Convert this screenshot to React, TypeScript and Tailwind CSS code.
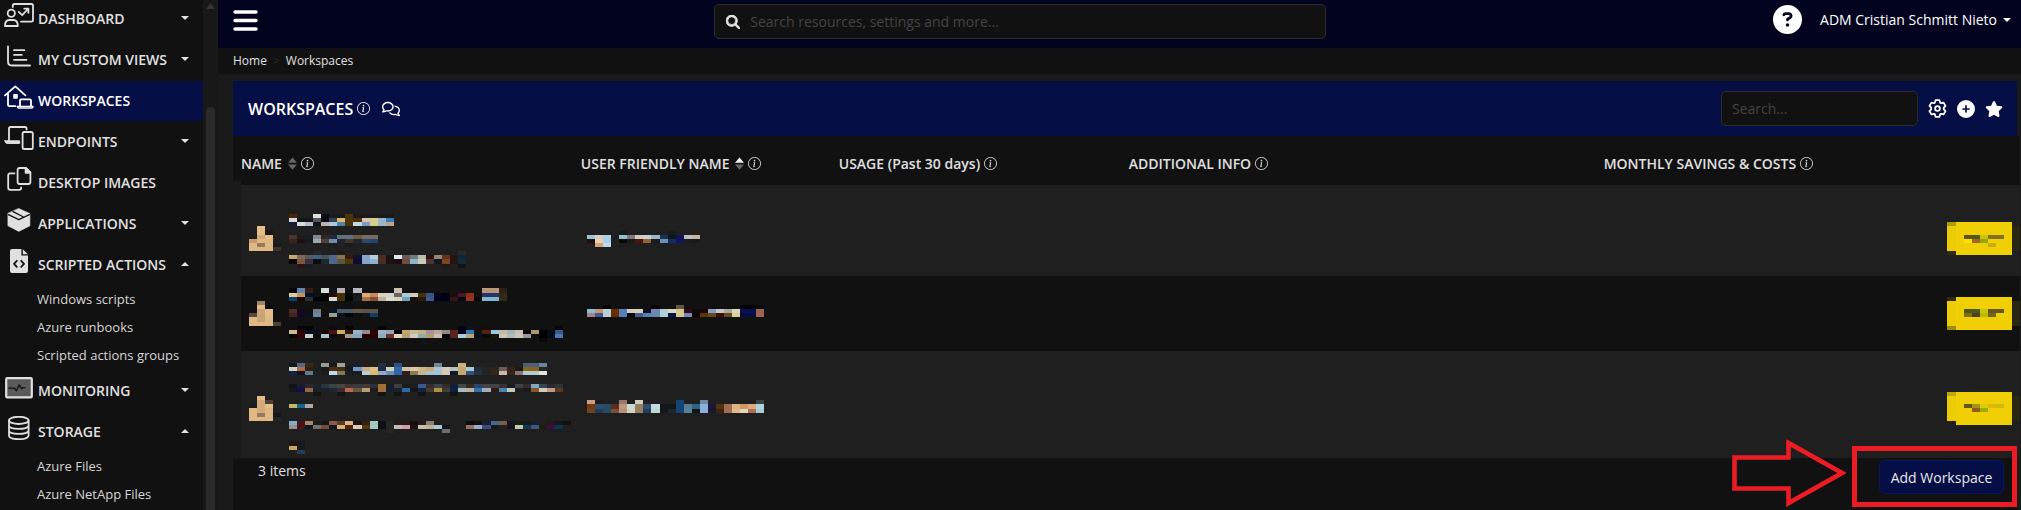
import React from "react";
import { FaCirclePlus, FaCircleQuestion, FaMagnifyingGlass, FaRegComments, FaStar } from "react-icons/fa6";
import { BsInfoCircle } from "react-icons/bs";

/* ---------- pixelated cell content ---------- */

type Strip = [number, string];

const CELL = 8.06;

function Mosaic({ strips, width, height }: { strips: Strip[]; width: number; height: number }) {
  return (
    <svg width={width} height={height} aria-hidden="true" shapeRendering="crispEdges" className="block shrink-0">
      {strips.map(([y, colours], r) => {
        const next = strips[r + 1];
        const h = next && next[0] - y < 6 ? next[0] - y : 4;
        return colours.split(" ").map((c, i) => {
          if (c === ".") return null;
          const x = Math.round(i * CELL);
          return <rect key={`${r}-${i}`} x={x} y={y} width={Math.round((i + 1) * CELL) - x} height={h} fill={`#${c}`} />;
        });
      })}
    </svg>
  );
}

const thumbs: Strip[][] = [
  [
    [25, ". e6bd88"],
    [29, ". e6bd88 181818"],
    [34, ". d4aa7a e6bd88"],
    [38, "c89c70 e0b884 e0b884"],
    [42, "e0b884 967a5c e0b884 181a1c"],
    [46, "e0b884 e0b884 e0b884 3c342c"],
  ],
  [
    [25, ". 9c8464"],
    [29, ". e6bd88 0a0a0a"],
    [33, ". c8a478 e6bd88"],
    [37, "5c4838 c8a478 e6bd88"],
    [41, "e0b884 c8a478 e0b884"],
    [46, "e0b884 e0b884 e0b884 4c4030"],
  ],
  [
    [45, ". e6bd88"],
    [49, ". d4aa7a 4c4238"],
    [53, "181a1c d4aa7a e6bd88"],
    [57, "e0b884 d4aa7a e0b884"],
    [62, "e0b884 967a5c e0b884 14181a"],
    [66, "e0b884 e0b884 e0b884 242424"],
  ],
];

const names: Strip[][] = [
  [
    [13, "4a2408 . . e0e0e0 0a0c12 1a1a1a 1a1a1a 4a3408 1a1a1a 1a1a1a 1a1a1a 1a1a1a 1a1a1a"],
    [17, "d8dce0 141414 141414 505860 0a0c14 33415a d9b870 4a3408 46340f e0c0b4 d8cc8c 9cb4c8 3c7cb4"],
    [21, "1a1a30 d4dce0 b4bccc 121416 c0b0ae a8c8dc 5480b0 4a3408 c8d8e0 7c9cc0 d8cc8c 9cb4c8 c0a484"],
    [34, "4c342c 1c1c1c 1a1e1e 84888e 302820 1c2840 607080 607080 6c5c48 786c60 786c60"],
    [38, "3a2422 220e12 141c1e 9ca8ac 4c4038 748cac 20242c 443428 22282c 30486c 244470"],
    [42, ". . . . . . . 181a22"],
    [50, ". . . 262626 . . 201a16 . . . . . 262422 . . . . . . . . 2a2a2a"],
    [54, "c8a870 806858 5c5860 40608c 485458 50648c 84744c 381808 101030 88a4cc b4ccd4 4c2c24 181414 e0e8ec 6c5854 747c78 b8b8b0 2c1010 948480 64301a 241414 0c2834"],
    [58, "080404 7c5844 383040 0c0c0c 202830 4c6890 5c5840 4c380c 0c0c30 88a4cc 8cb4cc 4c2c24 181414 200a12 6c4c3c 8cb4cc ccccb4 4c3430 14181c 7c4420 241414 182838"],
    [63, ". 2c1014 161e20 . . . . . . . . . . . . . . . . 201818 . 141414"],
  ],
  [
    [12, "080008 6484b0 381c14 . d4dcd4 101418 b8b0b0 0c1010 b4b8c0 . . . . ccc0b0 . . . . . . . . . . b89878 b89878 2c2018"],
    [17, "dccc94 c89454 001038 0c1010 040404 2c0800 443004 040a08 141818 dca878 c88858 dcd0bc d0d4cc 6c6460 a8ccd4 d4ccb8 443010 3c5080 040420 000018 200c0c 4c1828 8c3018 . 283468 283468 342818"],
    [21, "0c4078 200404 283030 000008 040404 d8d8d8 443004 040404 181c1c a87048 845038 bcb09c d8dcd0 d8d0b8 6ca4bc 181008 281808 405890 000018 000018 301814 080814 943420 0a0a0a 80b8d4 80b8d4 342818"],
    [33, "502c24 140818 0e1014 707c88 140e08 0a1428 485864 485864 645848 5c5448 5c5448"],
    [37, "402420 180424 0c1014 6c88a0 101010 98a08c 0c141c 000408 0c1010 0c1420 143c6c"],
    [50, ". 080004 080404 . . 0a0a14 . 080404 . . . 080404 . . . . . . . . . 04040c 0a1420 . 180c08 . . . . . . . . 04040c"],
    [54, "c8bc8c 300000 001028 0c1014 140408 4c1014 d0ac68 2c1808 98b4c4 948c8c 300004 98b4c4 94a4b0 080004 c8a468 c0bc9c c4b080 a090a0 b4a898 948880 5c2420 000020 3478ac 0c1010 542014 98c8e4 c0b8a8 a4b4b4 c8c0b0 0c0408 ac9870 000000 040c18 3c5888"],
    [58, "040404 300000 ccccc8 0c0c10 a8c4d0 080c10 14100c a89890 84a8c0 280000 280004 8cacc0 702c24 e0d8c0 b4a070 d0ccb8 8cacb0 b49c68 c8c0b0 000000 5c2420 b0ccd4 b8a878 0c1014 080804 1c1404 ccc4b4 b0bab8 ccc4b4 94989c 101010 000000 040c18 4c78b4"],
    [62, ". . . . . . . . . . . . . . . . . . . . . . . . . . . . . . . 080808"],
  ],
  [
    [12, "14161c 506880 38281a 1c2020 949c98 18181c a0a0a0 . 18202c . . 203044 . 305080 . . . . 708898 . . c8b480 . . . . . . . 4c607c 4c607c 6c8490"],
    [16, "d0d4c0 b06848 381c10 1c2020 181818 542c0c 403010 141a1c 7098c4 d0a884 dcc08c 1c2c44 ccd0bc 3068a8 d0c0a8 dcc8a8 ccb888 c4ac74 a8c4d0 d4ccbc b8c0b8 c0a870 a8c8d4 1c2c38 202424 342414 64605c 3c2018 1c1a18 8c6418 8c6418 202830"],
    [20, "182048 14141c 5c7c8c 1c2020 1c1c1c b8d8f4 847460 1a1e1e 1c1c20 b0d0dc dcb868 98a8c4 6890b0 2c68b0 341c18 8c7c50 c0b490 a8c0d0 a4c4d4 d4c8b8 141828 c0a870 385080 203440 202424 30281c d0b8a8 302818 8c7474 b0ccd0 b0ccd0 e8e4d4"],
    [33, "101418 1c1c30 302828 1c2028 283440 384440 484440 443430 383c3c 443830 283038 a07034 1c1c20 3c4044 1c1c1c 1e1e20 3c5888 382c28 3c444c 342c28 102038 404848 302a28 284468 444444 444444 3c302c 1c1c28 3c4444 342c28 80a8c4 384450 242a30 2c3438"],
    [37, "101820 10104c 906848 1c2028 182028 1c2838 382c30 b86858 6c543c b4a07c 201c18 a07034 102038 1c2024 2c68b0 14161c 142440 443c34 b09040 443c34 0c2040 a4bcc0 bcb09c 3070a8 a4b0b8 301c14 4484b4 c4c8b8 1e1e20 181c1c 885828 c8d0bc c09888 5c3820"],
    [41, ". . . 141414 . . 141414 . . . . 141414 . 141414 . . 141414 . . . 141414"],
    [53, "c4b464 106890 b0a8a4"],
    [70, "80acd0 481418 a48868 1c1c1c 14161c 905848 5c3828 e0b488 1c1412 342010 a4c8c0 101014 242424 241c18 241818 180c0c 241c18 8c8078 201c1c . . . 0c0c0c 101010 182030 44688c 785c4c 141420 181c18 141c20 14202c . 201818 14141a 101010"],
    [74, "a08c80 481418 101820 74706a 784838 101820 d8b070 4c2808 e0ccb4 50380c a4c8c0 101014 242424 c4bcb4 cca0a4 201012 c8bcac b8b49c acc8d4 14161c 202018 . 987060 9cacc0 444880 141c18 242020 16101c c0c8a8 103850 445480 201c10 3c1040 083850 202020"],
    [78, ". . . . . . . . . . . . 262626 . . . . . . 6c6c6c"],
    [90, "201810 161a1c"],
    [95, "c8a860 18181c"],
    [99, ". 243c54"],
  ],
];

const friendlyNames: Strip[][] = [
  [
    [30, ". . . . 181a1a . . . . . 181a1c"],
    [34, "90c8d8 d8ccc8 b4d0e0 1a1e1e 90c0d0 807878 d0ccc0 c8d0d8 a0b4c8 18344c 101418 14145c c0c0b8 c4b4a8"],
    [38, "200c0c e8d4ac a8d0ec 1c201e 080a08 181c18 4c140c 946438 181c20 6c90bc 0c2c68 14145c 181c1c 181a1a"],
    [42, ". d4a080 b8dce8"],
  ],
  [
    [29, ". . 040404 . . . . . 0a0604 . . 605844 . . . . . . . 040408 040408 0a0c0e"],
    [33, "88bcd0 cc9474 b4d0d8 6c2c00 5480bc d8ccbc d8d0b8 041020 6c88b0 b0d0d8 dcd8b8 d4c890 300818 080c0c 1c0408 8c9cbc c0c8cc a8a89c dcd4c4 081054 081054 9c6450"],
    [37, "a48488 405890 b4d0d8 6c2c00 5480bc 080808 485c8c 5480bc 6c88b0 b0d0d8 001848 d4c890 7888b8 100000 583800 644820 400c04 604820 dcd090 080c44 080c44 9c6450"],
  ],
  [
    [49, "c8a080 181a1c . . 987868 . d0ccc0 . . . . 144474 . . 6c8ca4 . . . . . . 384448"],
    [53, "703c18 344c6c 244c64 5c2c1c c09880 c8dcd4 948060 304c6c bcdce4 141618 14161a 144474 547c94 2c6484 8cb0d8 161840 54340c a06c54 dcb480 d09860 dcac78 b0d4dc"],
    [58, "744418 203c58 244c64 7c5038 b89078 d0d4bc 948060 203c58 c0d8cc 14181a 1c2830 144474 5c8098 101418 8cb0d8 181828 3c2410 a06c54 e0b88c e0d8bc b06c58 a8ccd4"],
  ],
];

const costs: Strip[][] = [
  [
    [34, ". . 5c5414 4c5c14 ccc408 84701c 84701c"],
    [38, ". . fce000 a86420 94a808"],
    [42, ". . . . . ccac10"],
  ],
  [
    [33, ". . 4c5814 4c5814 c8c408 645820 645820"],
    [37, ". . 806c1c 4c4020 bcb808 706818"],
  ],
  [
    [53, ". . 645420 a49410 dccc08 e0b80c d0b80c"],
    [57, ". . . 945824 9cac08"],
  ],
];

const rows = [
  { height: 75, badge: 21, corners: ["#b09a08", "#2e2a14"], tone: "bg-[#1f1f1f]", pad: "pt-4" },
  { height: 75, badge: 21, corners: ["#2e2a14", "#a08c10"], tone: "bg-[#111111]", pad: "" },
  { height: 107, badge: 41, corners: ["#c0a808", "#1f1f1f"], tone: "bg-[#1f1f1f]", pad: "" },
];

function CostBadge({ index }: { index: number }) {
  const { height, badge, corners } = rows[index];
  return (
    <svg width={73} height={height} aria-hidden="true" shapeRendering="crispEdges" className="block">
      <rect x={0} y={badge} width={9} height={4} fill={corners[0]} />
      <rect x={0} y={badge + 4} width={9} height={25} fill="#eccc04" />
      <rect x={0} y={badge + 29} width={9} height={4} fill={corners[1]} />
      <rect x={9} y={badge} width={56} height={33} fill="#f0d004" />
      <rect x={65} y={badge + 4} width={8} height={25} fill="#2a2612" />
      {costs[index].map(([y, colours]) =>
        colours.split(" ").map((c, i) =>
          c === "." ? null : <rect key={`${y}-${i}`} x={1 + i * 8} y={y} width={8} height={4} fill={`#${c}`} />
        )
      )}
    </svg>
  );
}

/* ---------- icons ---------- */

function Icon({ children }: { children: React.ReactNode }) {
  return (
    <svg
      width={30}
      height={24}
      viewBox="0 0 30 24"
      fill="none"
      stroke="currentColor"
      strokeWidth={1.8}
      strokeLinecap="round"
      strokeLinejoin="round"
      aria-hidden="true"
      className="mb-1.5 shrink-0"
    >
      {children}
    </svg>
  );
}

const icons = {
  dashboard: (
    <Icon>
      <path d="M8.8 4V2.6Q8.8 1 10.4 1H27.4Q29 1 29 2.6V17Q29 18.6 27.4 18.6H17" />
      <circle cx="7.3" cy="10.2" r="3.6" />
      <path d="M1 23Q1 17 5.4 17H9.4Q13.8 17 13.8 23Z" />
      <path d="M14.8 8.8L18.2 12.2L24 6M20.2 5.6H24.4V9.8" />
    </Icon>
  ),
  views: (
    <Icon>
      <path d="M4 2.5V17.5Q4 21.5 8 21.5H26" />
      <path d="M10 6.2H20.3M10 10.9H17.8M10 15.8H22.5" />
    </Icon>
  ),
  workspaces: (
    <Icon>
      <path d="M1 10.4L11.3 1.4L21.4 10.4M4 8.5V19.6Q4 21.2 5.6 21.2H11.5" />
      <rect x="9.2" y="9" width="4.6" height="4.8" rx="0.8" fill="currentColor" stroke="none" />
      <path d="M16 20.4V15.6Q16 14.4 17.2 14.4H25.8Q27 14.4 27 15.6V20.4" />
      <path d="M13.4 21.4H29Q29 23 27.6 23H14.8Q13.4 23 13.4 21.4Z" strokeWidth={1.4} />
    </Icon>
  ),
  endpoints: (
    <Icon>
      <path d="M5 14.5V2.6Q5 1 6.6 1H21Q22.6 1 22.6 2.6V3.4" />
      <path d="M1 14.8H15.6V17.4H3Q1 17.4 1 14.8Z" fill="currentColor" strokeWidth={1} />
      <rect x="18.6" y="6" width="10.2" height="17" rx="1.6" />
    </Icon>
  ),
  images: (
    <Icon>
      <path d="M13.6 3Q13.6 1 15.6 1H22L26.4 5.4V15Q26.4 17 24.4 17H15.6Q13.6 17 13.6 15Z" />
      <path d="M21.6 1V5.8H26.4Z" fill="currentColor" />
      <path d="M10.4 6.4H6.2Q4.2 6.4 4.2 8.4V20.8Q4.2 22.8 6.2 22.8H15.2Q17.2 22.8 17.2 20.8V20.4" />
    </Icon>
  ),
  applications: (
    <Icon>
      <path
        d="M14.8 0.6L25.9 5.6V17.8L14.8 23.4L3.9 17.8V5.6Z"
        fill="currentColor"
        stroke="currentColor"
        strokeWidth={0.6}
      />
      <path d="M4.4 6.6L14.8 11.6L25.4 6.6M9 3.6L19.6 9" stroke="#111111" strokeWidth={1.3} />
    </Icon>
  ),
  scripts: (
    <Icon>
      <path d="M8 0H17.4V6.4H24V22Q24 24 22 24H8Q6 24 6 22V2Q6 0 8 0Z" fill="currentColor" stroke="none" />
      <path d="M18.8 0.2L23.8 5.2H18.8Z" fill="currentColor" stroke="none" />
      <path d="M12.8 11.8L10 14.8L12.8 17.8M17.2 11.8L20 14.8L17.2 17.8" stroke="#111111" />
    </Icon>
  ),
  monitoring: (
    <Icon>
      <rect x="2.2" y="3.2" width="25.6" height="19.2" rx="1" fill="#5a5a5a" strokeWidth={2.2} />
      <path d="M5 13.2H10.6L12.4 15.8L15.2 9.8L17.6 13.8L19 12.6H20.6" stroke="#111111" strokeWidth={1.3} />
    </Icon>
  ),
  storage: (
    <Icon>
      <ellipse cx="14.8" cy="4.4" rx="9.8" ry="3.6" />
      <path d="M5 4.4V19.6C5 24.4 24.6 24.4 24.6 19.6V4.4M5 9.6C5 14 24.6 14 24.6 9.6M5 14.6C5 19 24.6 19 24.6 14.6" />
    </Icon>
  ),
};

function GearIcon() {
  return (
    <svg width={19} height={19} viewBox="0 0 19 19" fill="none" stroke="currentColor" aria-hidden="true">
      <path
        d="M7.6 1.2H11.4L12.1 3.6L13.2 4.2L15.6 3.6L17.5 6.9L15.8 8.7V10.3L17.5 12.1L15.6 15.4L13.2 14.8L12.1 15.4L11.4 17.8H7.6L6.9 15.4L5.8 14.8L3.4 15.4L1.5 12.1L3.2 10.3V8.7L1.5 6.9L3.4 3.6L5.8 4.2L6.9 3.6Z"
        strokeWidth={1.8}
        strokeLinejoin="round"
      />
      <circle cx="9.5" cy="9.5" r="2.4" strokeWidth={1.8} />
    </svg>
  );
}

type NavItem = {
  label: string;
  icon: React.ReactNode;
  caret?: "up" | "down";
  active?: boolean;
  children?: string[];
};

const nav: NavItem[] = [
  { label: "DASHBOARD", icon: icons.dashboard, caret: "down" },
  { label: "MY CUSTOM VIEWS", icon: icons.views, caret: "down" },
  { label: "WORKSPACES", icon: icons.workspaces, active: true },
  { label: "ENDPOINTS", icon: icons.endpoints, caret: "down" },
  { label: "DESKTOP IMAGES", icon: icons.images },
  { label: "APPLICATIONS", icon: icons.applications, caret: "down" },
  {
    label: "SCRIPTED ACTIONS",
    icon: icons.scripts,
    caret: "up",
    children: ["Windows scripts", "Azure runbooks", "Scripted actions groups"],
  },
  { label: "MONITORING", icon: icons.monitoring, caret: "down" },
  { label: "STORAGE", icon: icons.storage, caret: "up", children: ["Azure Files", "Azure NetApp Files"] },
];

function Caret({ dir = "down" }: { dir?: "up" | "down" }) {
  return (
    <svg width={8} height={4} viewBox="0 0 8 4" fill="currentColor" aria-hidden="true" className="shrink-0">
      <path d={dir === "down" ? "M0 0H8L4 4Z" : "M0 4H8L4 0Z"} />
    </svg>
  );
}

function Sidebar() {
  return (
    <aside className="flex shrink-0">
      <nav aria-label="Main" className="-mt-px w-[203px]">
        <ul>
          {nav.map((item) => (
            <li key={item.label} className="mb-px">
              <button
                type="button"
                className={
                  item.active
                    ? "flex h-10 w-full items-center gap-1 bg-[#060e46] pr-3.5 pb-0.5 pl-1 text-white"
                    : "flex h-10 w-full items-center gap-1 pr-3.5 pb-0.5 pl-1 text-[#e0e0e0]"
                }
              >
                {item.icon}
                <span className="flex-1 text-left text-[14px] font-semibold whitespace-nowrap">{item.label}</span>
                {item.caret && <Caret dir={item.caret} />}
              </button>
              {item.children && (
                <ul className="pb-px">
                  {item.children.map((c) => (
                    <li key={c}>
                      <a href="#" className="flex h-7 items-center pt-0.5 pl-[37px] text-[13px] text-[#d6d6d6]">
                        {c}
                      </a>
                    </li>
                  ))}
                </ul>
              )}
            </li>
          ))}
        </ul>
      </nav>
      <div aria-hidden="true" className="flex w-[15px] flex-col items-center bg-[#181818] pt-[3px]">
        <svg width={9} height={6} viewBox="0 0 9 6" fill="#333333">
          <path d="M0 6L4.5 0L9 6Z" />
        </svg>
        <div className="mt-[98px] w-[9px] flex-1 rounded-t-full bg-[#2b2b2b]" />
      </div>
    </aside>
  );
}

/* ---------- table ---------- */

function SortIcon({ up }: { up?: boolean }) {
  return (
    <svg width={9} height={13} viewBox="0 0 9 13" aria-hidden="true">
      <path d="M0 5.8L4.5 0.5L9 5.8Z" fill={up ? "#f0f0f0" : "#666666"} />
      <path d="M0 7.4L4.5 12.7L9 7.4Z" fill="#666666" />
    </svg>
  );
}

const columns: { label: string; width: string; sort?: "none" | "up" }[] = [
  { label: "NAME", width: "w-[19.1%]", sort: "none" },
  { label: "USER FRIENDLY NAME", width: "w-[14.5%]", sort: "up" },
  { label: "USAGE (Past 30 days)", width: "w-[16.3%]" },
  { label: "ADDITIONAL INFO", width: "w-[26.7%]" },
  { label: "MONTHLY SAVINGS & COSTS", width: "w-[23.4%]" },
];

function WorkspaceTable() {
  return (
    <div className="bg-[linear-gradient(#111111_45px,#1a1a1a_45px)] pl-2">
      <table className="w-full table-fixed border-collapse">
        <thead>
          <tr className="h-[49px] bg-[#111111]">
            {columns.map((c) => (
              <th key={c.label} scope="col" className={`${c.width} p-0 text-left`}>
                <div className="flex items-center gap-1 pt-1.5 text-[14px] font-semibold whitespace-nowrap text-[#e0e0e0]">
                  <span>{c.label}</span>
                  {c.sort && (
                    <button type="button" aria-label={`Sort by ${c.label}`} className="ml-0.5">
                      <SortIcon up={c.sort === "up"} />
                    </button>
                  )}
                  <BsInfoCircle size={13} />
                </div>
              </th>
            ))}
          </tr>
        </thead>
        <tbody>
          {rows.map((r, i) => (
            <tr key={i} className={r.tone}>
              <td className={`p-0 ${r.pad}`}>
                <div className="flex gap-2 pl-2">
                  <Mosaic strips={thumbs[i]} width={32} height={r.height} />
                  <Mosaic strips={names[i]} width={286} height={r.height} />
                </div>
              </td>
              <td className={`p-0 pl-1.5 ${r.pad}`}>
                <Mosaic strips={friendlyNames[i]} width={180} height={r.height} />
              </td>
              <td />
              <td />
              <td className={`p-0 ${r.pad}`}>
                <div className="flex justify-end">
                  <CostBadge index={i} />
                </div>
              </td>
            </tr>
          ))}
        </tbody>
      </table>
    </div>
  );
}

/* ---------- page ---------- */

export default function App() {
  return (
    <div className="flex min-h-screen overflow-hidden bg-[#111111] font-['Open_Sans','Noto_Sans',sans-serif] text-[#e0e0e0]">
      <div className="flex h-screen overflow-hidden">
        <Sidebar />
      </div>
      <div className="flex min-w-0 flex-1 flex-col bg-[#1a1a1a]">
        <header className="grid h-12 grid-cols-[5fr_612px_7fr] items-start bg-[#02041f]">
          <button type="button" aria-label="Toggle menu" className="mt-2 ml-[15px] w-6">
            <svg width={25} height={25} viewBox="0 0 25 25" stroke="#ffffff" strokeWidth={3.4} strokeLinecap="round">
              <path d="M2 4H23M2 12.5H23M2 21H23" />
            </svg>
          </button>
          <label className="mt-1 flex h-[35px] items-center gap-2.5 rounded-[5px] border border-[#2c2c2c] bg-[#111111] px-[11px]">
            <FaMagnifyingGlass size={14} color="#e8e8e8" stroke="#e8e8e8" strokeWidth={30} />
            <input
              type="text"
              aria-label="Search resources"
              placeholder="Search resources, settings and more..."
              className="min-w-0 flex-1 bg-transparent text-[14px] outline-none placeholder:text-[#444444]"
            />
          </label>
          <div className="flex items-center justify-end gap-[18px] pt-[5px] pr-2.5 text-white">
            <button type="button" aria-label="Help">
              <FaCircleQuestion size={29} />
            </button>
            <button type="button" className="flex items-center gap-1.5 text-[14px] whitespace-nowrap">
              ADM Cristian Schmitt Nieto
              <Caret />
            </button>
          </div>
        </header>

        <nav aria-label="Breadcrumb" className="flex h-[26px] items-center gap-1.5 bg-[#111111] pl-[15px] text-[12px]">
          <a href="#">Home</a>
          <span className="text-[#2a2a2a]">&gt;</span>
          <a href="#">Workspaces</a>
        </nav>

        <main className="mt-[7px] flex flex-1 flex-col pr-px pl-[15px]">
          <div className="mr-[3px] flex h-[55px] items-center justify-between bg-[#060e46] pr-3.5 pl-[15px] text-white">
            <div className="flex items-center">
              <h1 className="text-[16px] font-semibold">WORKSPACES</h1>
              <BsInfoCircle size={13} className="ml-1" />
              <FaRegComments size={18} className="ml-3" />
            </div>
            <div className="flex items-center gap-2.5">
              <input
                type="text"
                aria-label="Search workspaces"
                placeholder="Search..."
                className="h-[35px] w-[197px] rounded-[5px] border border-[#2c2c2c] bg-[#111111] px-2.5 text-[14px] outline-none placeholder:text-[#444444]"
              />
              <button type="button" aria-label="Settings">
                <GearIcon />
              </button>
              <button type="button" aria-label="Add">
                <FaCirclePlus size={18} />
              </button>
              <button type="button" aria-label="Favorite">
                <FaStar size={18} />
              </button>
            </div>
          </div>

          <WorkspaceTable />

          <footer className="mr-[3px] flex flex-1 items-start justify-between bg-[#111111] pr-[13px] pl-[25px]">
            <p className="pt-0.5 text-[14px]">3 items</p>
            <div className="relative mt-0.5">
              <button
                type="button"
                className="h-[34px] w-[125px] rounded-md border border-[#0c1560] bg-[#060e46] text-[14px] text-[#e8e8e8]"
              >
                Add Workspace
              </button>
              <div className="pointer-events-none absolute -top-3.5 -right-[13px] -bottom-[13px] -left-[27px] border-[5px] border-[#ed1c24]" />
              <svg
                width={114}
                height={68}
                viewBox="0 0 114 68"
                fill="none"
                stroke="#ed1c24"
                strokeWidth={4.6}
                aria-hidden="true"
                className="pointer-events-none absolute -top-[21px] -left-[147px]"
              >
                <path d="M2.5 18.5H56.5V4L110 34L56.5 64V49.5H2.5Z" />
              </svg>
            </div>
          </footer>
        </main>
      </div>
    </div>
  );
}
